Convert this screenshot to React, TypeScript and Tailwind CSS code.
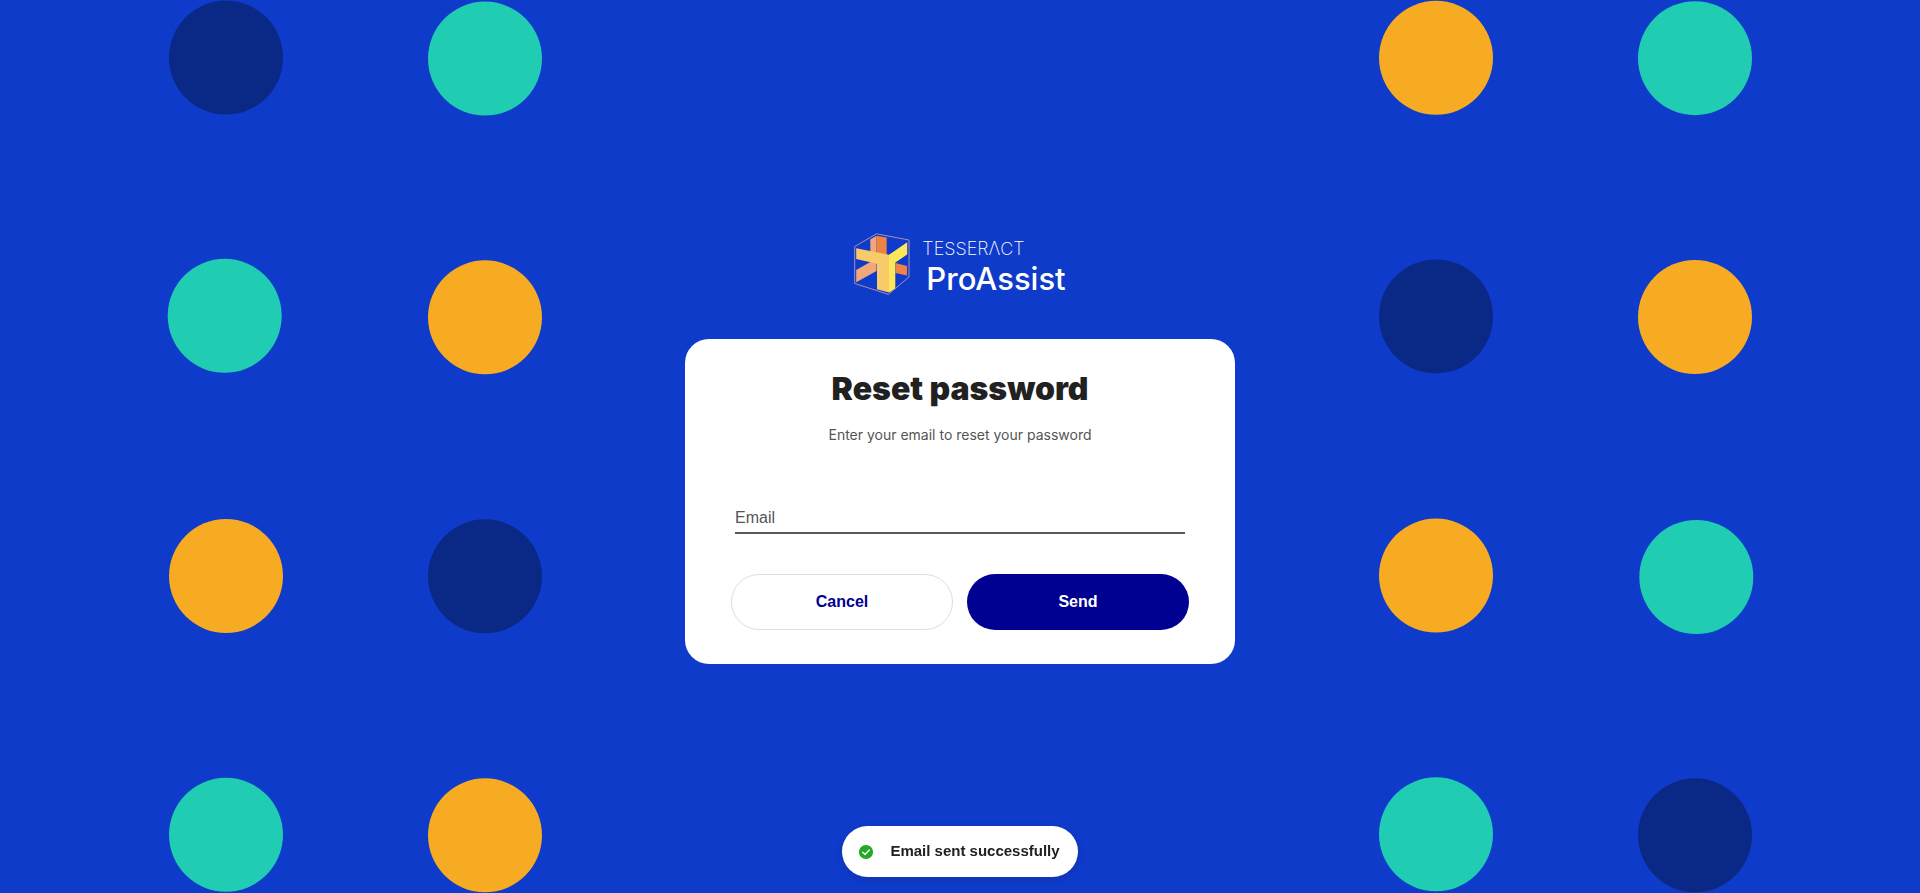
type Dot = { cx: number; cy: number; fill: string };

const NAVY = '#0a2885';
const TEAL = '#20cdb2';
const AMBER = '#f7ab22';

const dots: Dot[] = [
  { cx: 226, cy: 57.6, fill: NAVY },
  { cx: 485, cy: 58.6, fill: TEAL },
  { cx: 224.7, cy: 315.8, fill: TEAL },
  { cx: 485, cy: 317.3, fill: AMBER },
  { cx: 226, cy: 576, fill: AMBER },
  { cx: 485, cy: 576.3, fill: NAVY },
  { cx: 226, cy: 834.8, fill: TEAL },
  { cx: 485, cy: 835.3, fill: AMBER },
  { cx: 1436, cy: 57.8, fill: AMBER },
  { cx: 1695, cy: 58.2, fill: TEAL },
  { cx: 1436, cy: 316.4, fill: NAVY },
  { cx: 1695, cy: 317, fill: AMBER },
  { cx: 1436, cy: 575.6, fill: AMBER },
  { cx: 1696.3, cy: 577, fill: TEAL },
  { cx: 1436, cy: 834.3, fill: TEAL },
  { cx: 1695, cy: 835.3, fill: NAVY },
];

function DotBackdrop() {
  return (
    <svg
      aria-hidden="true"
      className="absolute inset-0 h-full w-full"
      viewBox="0 0 1920 893"
      preserveAspectRatio="xMidYMid slice"
    >
      {dots.map((dot) => (
        <circle key={`${dot.cx}-${dot.cy}`} cx={dot.cx} cy={dot.cy} r={57} fill={dot.fill} />
      ))}
    </svg>
  );
}

function CubeMark() {
  return (
    <svg aria-hidden="true" className="h-[62px] w-14" viewBox="0 0 56 62">
      <path d="M16.3 6.5 22.5 2.7V24.5L16.3 23Z" fill="#f2a67c" />
      <path d="M22.5 2.7 32.7 4.6V26.2L22.5 24.5Z" fill="#ef8245" />
      <path d="M2.2 37 22.5 25.5V38L2.2 49.2Z" fill="#f2a67c" />
      <path d="M41.5 30 53 33V42.5L41.5 40Z" fill="#ef8245" />
      <path d="M2.2 15.2 35 21.7V59.6L23 56.2V30.7L2.2 26Z" fill="#f6cb68" />
      <path d="M35 21.7 53.2 9.2V21.4L41.3 29.4V55.8L35 59.6Z" fill="#fce75b" />
      <path
        d="M.7 13.5 22.5.8 55 7V44L34.3 61.3.7 50.5Z"
        fill="none"
        stroke="#a98fa5"
        strokeWidth="1"
      />
    </svg>
  );
}

function Logo() {
  return (
    <div className="flex h-[62px] gap-3 text-white">
      <CubeMark />
      <div className="flex flex-col pt-1">
        <span className="font-['Inter',sans-serif] text-lg leading-6 font-extralight">
          TESSERΛCT
        </span>
        <span className="pl-1 font-['Inter',sans-serif] text-[31px] leading-9 font-medium">
          ProAssist
        </span>
      </div>
    </div>
  );
}

function ResetCard() {
  return (
    <main className="w-full max-w-[550px] rounded-3xl bg-white px-[46px] pt-8 pb-[34px]">
      <h1 className="text-center font-['Inter',sans-serif] text-[32px] leading-9 font-black text-[#212121]">
        Reset password
      </h1>
      <p className="mt-[18px] text-center font-['Inter',sans-serif] text-sm text-[#555555]">
        Enter your email to reset your password
      </p>
      <form onSubmit={(event) => event.preventDefault()}>
        <div className="mt-[53px] px-1">
          <input
            type="email"
            aria-label="Email"
            placeholder="Email"
            className="block h-9 w-full border-b-2 border-[#5b5b5b] pt-1.5 text-base outline-none placeholder:text-[#555555] placeholder:opacity-100"
          />
        </div>
        <div className="mt-10 grid grid-cols-2 gap-3.5">
          <button
            type="button"
            className="h-14 rounded-full border border-[#dedede] bg-white text-base font-bold text-[#000091]"
          >
            Cancel
          </button>
          <button type="submit" className="h-14 rounded-full bg-[#000091] text-base font-bold text-white">
            Send
          </button>
        </div>
      </form>
    </main>
  );
}

function Toast() {
  return (
    <div className="pointer-events-none fixed inset-x-0 bottom-4 flex justify-center">
      <div
        role="status"
        className="flex h-[51px] items-center gap-4 rounded-full bg-white pr-[18px] pl-4 text-[15px] font-bold text-[#212121] shadow-[0_2px_10px_rgba(0,0,0,0.12)]"
      >
        <svg aria-hidden="true" className="h-4 w-4" viewBox="0 0 16 16">
          <circle cx="8" cy="8" r="7.1" fill="#21ab24" />
          <path
            d="M4.7 8.2 7 10.4 11.3 6"
            fill="none"
            stroke="white"
            strokeWidth="1.4"
            strokeLinecap="round"
            strokeLinejoin="round"
          />
        </svg>
        Email sent successfully
      </div>
    </div>
  );
}

export default function App() {
  return (
    <div className="relative min-h-screen overflow-hidden bg-[#0f3bca] font-['Liberation_Sans',Arial,sans-serif]">
      <DotBackdrop />
      <div className="relative flex min-h-screen flex-col items-center justify-center gap-11 px-4 pt-1">
        <Logo />
        <ResetCard />
      </div>
      <Toast />
    </div>
  );
}
